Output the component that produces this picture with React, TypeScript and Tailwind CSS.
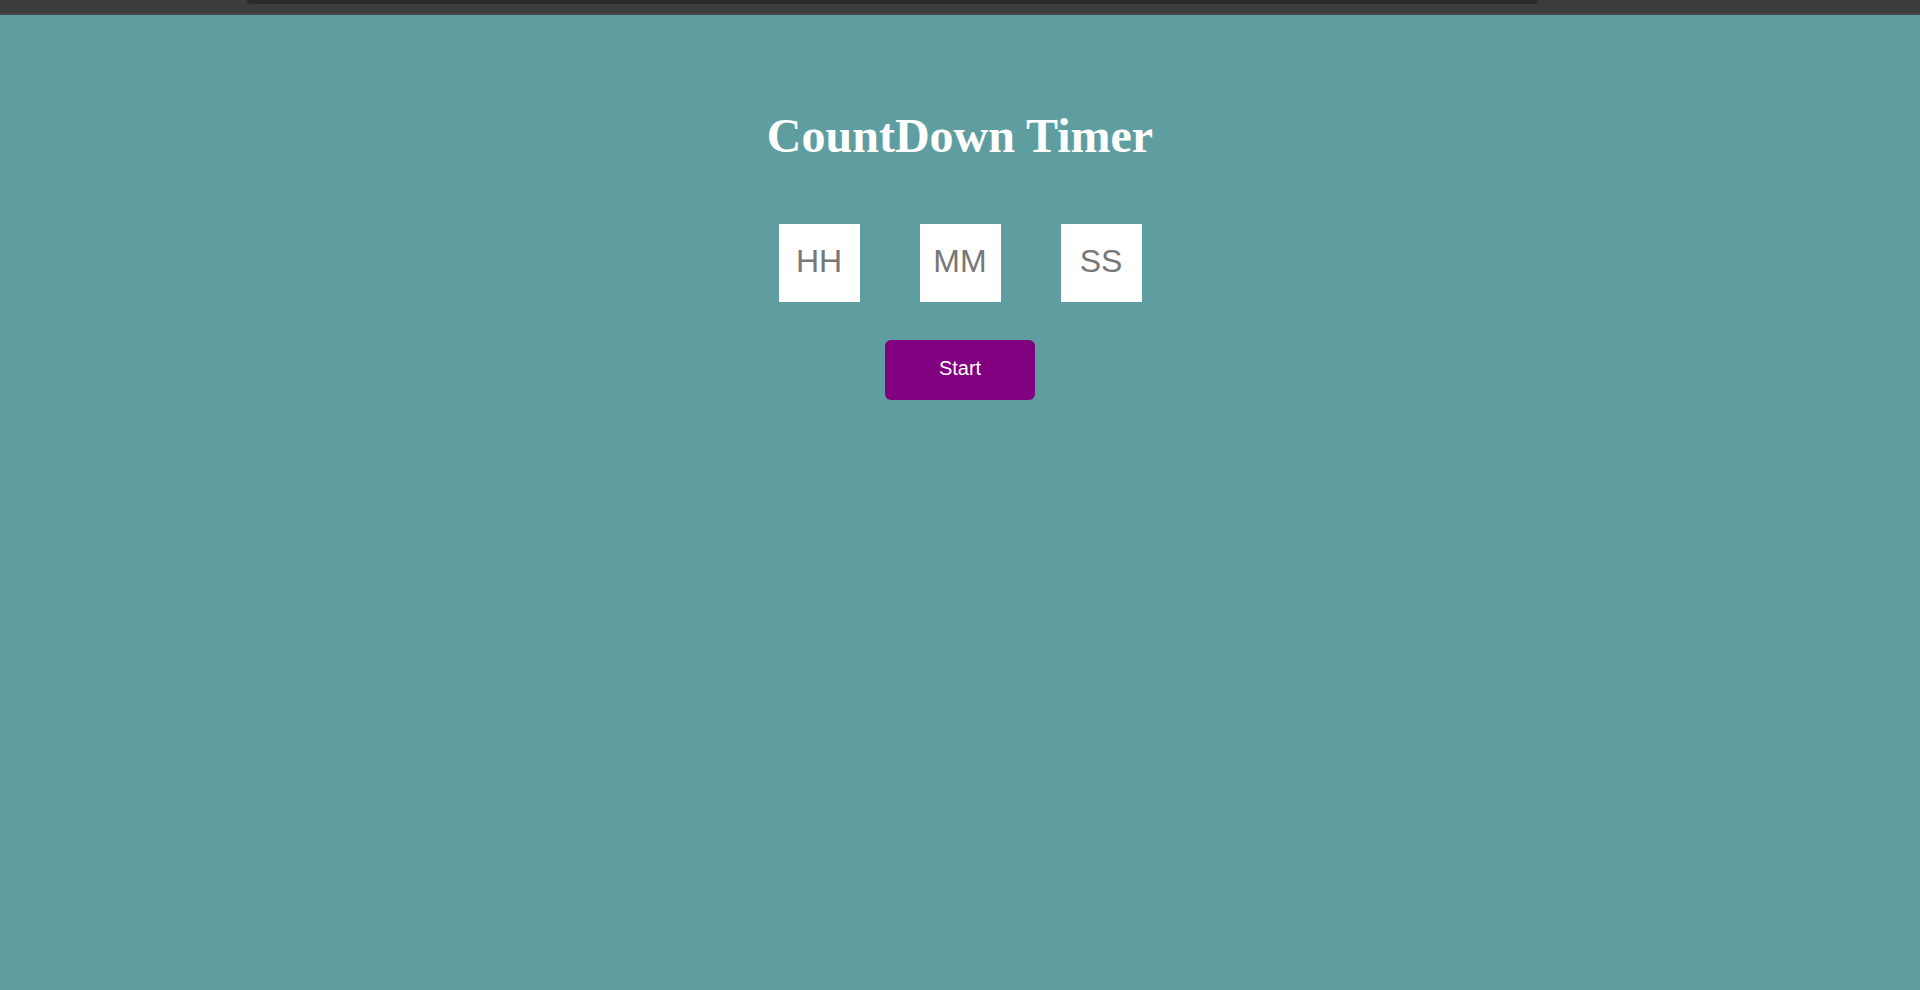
import { useState } from "react";

export default function App() {
  const [hh, setHh] = useState("");
  const [mm, setMm] = useState("");
  const [ss, setSs] = useState("");

  const boxClass =
    "w-[81px] h-[78px] pb-[3px] bg-white text-center text-[32px] text-black placeholder:text-[#777777] outline-none border-0 font-['Liberation_Sans',Arial,sans-serif]";

  return (
    <div className="min-h-[990px] flex flex-col bg-[#5f9ea0]">
      {/* browser chrome strip */}
      <div className="h-[15px] bg-[#3c3c3c] border-b-2 border-[#474747] flex">
        <div className="w-[1291px] h-[4px] bg-[#2a2a2a] rounded-b-[8px] ml-[247px]" />
      </div>

      <main className="flex flex-col items-center pt-[97px]">
        <h1 className="text-[48px] leading-none font-bold text-white font-['Liberation_Serif','Times_New_Roman',serif]">
          CountDown Timer
        </h1>

        <div className="flex gap-[60px] mt-[64px]">
          <input
            className={boxClass}
            placeholder="HH"
            value={hh}
            onChange={(e) => setHh(e.target.value)}
          />
          <input
            className={boxClass}
            placeholder="MM"
            value={mm}
            onChange={(e) => setMm(e.target.value)}
          />
          <input
            className={boxClass}
            placeholder="SS"
            value={ss}
            onChange={(e) => setSs(e.target.value)}
          />
        </div>

        <button className="mt-[38px] w-[150px] h-[60px] pb-[4px] rounded-[6px] bg-[#800080] text-white text-[20px] font-['Liberation_Sans',Arial,sans-serif]">
          Start
        </button>
      </main>
    </div>
  );
}
